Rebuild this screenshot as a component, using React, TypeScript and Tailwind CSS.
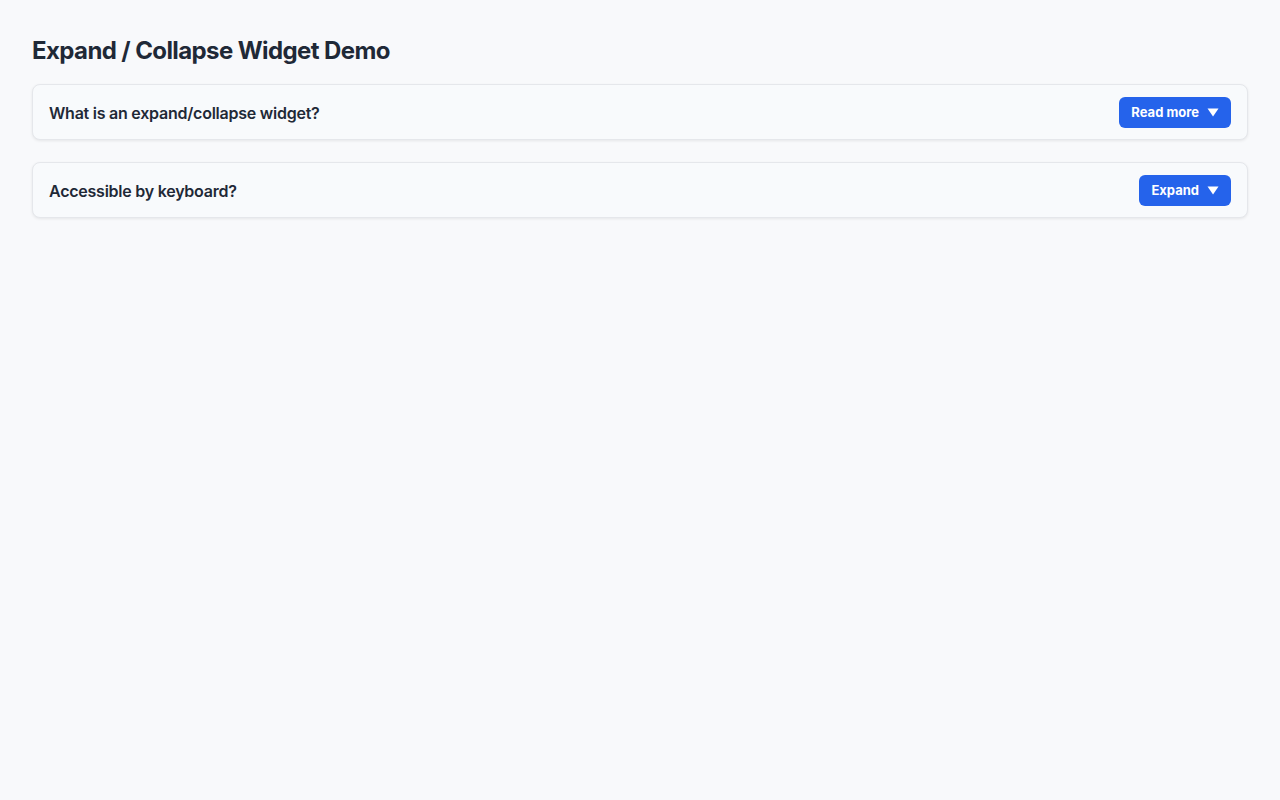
import React, { useState } from 'react';

interface ItemProps {
  title: string;
  label: string;
  body: string;
}

const Item: React.FC<ItemProps> = ({ title, label, body }) => {
  const [open, setOpen] = useState(false);
  return (
    <div className="bg-[#f8fafc] border border-[#e5e7eb] rounded-lg shadow-[0_1px_3px_rgba(0,0,0,0.08)]">
      <div className="h-[54px] flex items-center justify-between px-4">
        <span className="text-[16px] font-semibold text-[#1f2937] tracking-[-0.015em] pt-[2px]">{title}</span>
        <button
          type="button"
          aria-expanded={open}
          onClick={() => setOpen(!open)}
          className="h-[31px] flex items-center gap-2 px-3 rounded-md bg-[#2563eb] text-white text-[13px] font-bold"
        >
          <span className="pt-[1px]">{open ? 'Collapse' : label}</span>
          <svg width="12" height="9" viewBox="0 0 12 9" className={open ? 'rotate-180' : ''}>
            <path d="M0.5 0.5 L11.5 0.5 L6 8.5 Z" fill="white" />
          </svg>
        </button>
      </div>
      {open && <div className="px-4 pb-4 text-sm text-[#374151]">{body}</div>}
    </div>
  );
};

const App: React.FC = () => {
  return (
    <div className="min-h-screen bg-[#f8f9fb] p-8 font-['Inter',sans-serif]">
      <h1 className="text-2xl font-bold text-[#1f2937] leading-8 tracking-[-0.025em] mt-[3px] mb-[17px]">Expand / Collapse Widget Demo</h1>
      <div className="flex flex-col gap-[22px]">
        <Item
          title="What is an expand/collapse widget?"
          label="Read more"
          body="An expand/collapse widget shows or hides a section of content when its toggle is pressed."
        />
        <Item
          title="Accessible by keyboard?"
          label="Expand"
          body="Yes. The toggle is a native button, so it can be reached with Tab and activated with Enter or Space."
        />
      </div>
    </div>
  );
};

export default App;
